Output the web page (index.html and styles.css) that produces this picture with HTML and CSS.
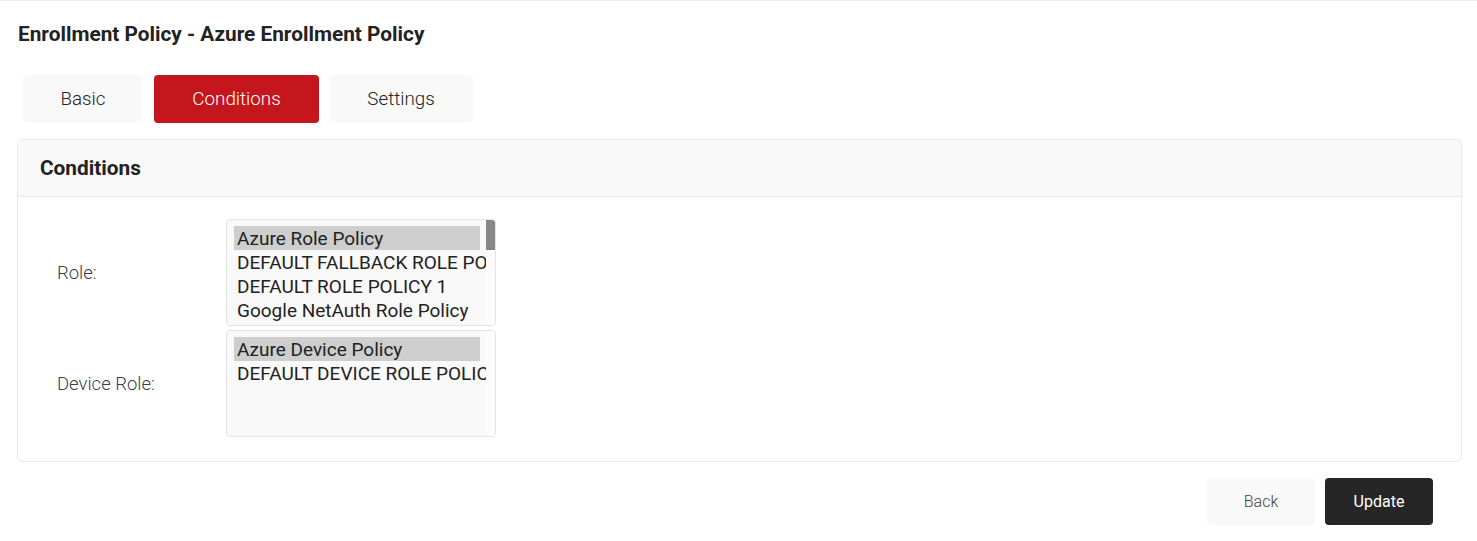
FILE: index.html
```html
<!DOCTYPE html>
<html lang="en">
<head>
<meta charset="utf-8">
<title>Enrollment Policy - Azure Enrollment Policy</title>
<link rel="stylesheet" href="styles.css">
</head>
<body>
<div class="page">
  <h1 class="title">Enrollment Policy - Azure Enrollment Policy</h1>
  <nav class="tabs">
    <button class="tab tab-basic">Basic</button>
    <button class="tab tab-active">Conditions</button>
    <button class="tab tab-settings">Settings</button>
  </nav>
  <section class="card">
    <header class="card-header">Conditions</header>
    <div class="card-body">
      <div class="form-row">
        <label class="form-label">Role:</label>
        <div class="listbox" role="listbox">
          <div class="options">
            <div class="option selected">Azure Role Policy</div>
            <div class="option">DEFAULT FALLBACK ROLE POLICY</div>
            <div class="option">DEFAULT ROLE POLICY 1</div>
            <div class="option">Google NetAuth Role Policy</div>
          </div>
          <div class="scrollbar"><div class="thumb"></div></div>
        </div>
      </div>
      <div class="form-row">
        <label class="form-label">Device Role:</label>
        <div class="listbox" role="listbox">
          <div class="options">
            <div class="option selected">Azure Device Policy</div>
            <div class="option">DEFAULT DEVICE ROLE POLICY</div>
          </div>
          <div class="scrollbar"></div>
        </div>
      </div>
    </div>
  </section>
  <div class="actions">
    <button class="btn btn-back">Back</button>
    <button class="btn btn-update">Update</button>
  </div>
</div>
</body>
</html>
```

FILE: styles.css
```css
* { box-sizing: border-box; }

html, body {
  margin: 0;
  padding: 0;
  background: #ffffff;
}

body {
  font-family: Roboto, "Liberation Sans", Arial, sans-serif;
  color: #222222;
  border-top: 1px solid #ececec;
}

.page {
  padding: 0 15px 0 17px;
}

.title {
  margin: 21px 0 0 1px;
  font-size: 20.8px;
  line-height: 24px;
  font-weight: 700;
  color: #222222;
}

.tabs {
  display: flex;
  gap: 11px;
  margin: 29px 0 0 6px;
}

.tab {
  height: 48px;
  border: none;
  border-radius: 4px;
  background: #f9f9f9;
  font-family: inherit;
  font-size: 18.8px;
  font-weight: 300;
  color: #222222;
  padding: 0;
}

.tab-basic { width: 120px; }
.tab-active { width: 165px; background: #c4161c; color: #ffffff; }
.tab-settings { width: 144px; margin-left: -1px; }

.card {
  margin-top: 16px;
  border: 1px solid #e8e8e8;
  border-radius: 6px;
  background: #ffffff;
}

.card-header {
  height: 57px;
  display: flex;
  align-items: center;
  padding-left: 22px;
  background: #f9f9f9;
  border-bottom: 1px solid #ebebeb;
  border-radius: 6px 6px 0 0;
  font-size: 20.8px;
  font-weight: 700;
  color: #222222;
}

.card-body {
  padding: 22px 0 24px;
  display: flex;
  flex-direction: column;
  gap: 4px;
}

.form-row {
  display: flex;
  align-items: center;
}

.form-label {
  width: 208px;
  padding-left: 39px;
  font-size: 18.5px;
  font-weight: 300;
  color: #34404f;
}

.listbox {
  width: 270px;
  height: 107px;
  display: flex;
  border: 1px solid #e4e4e4;
  border-radius: 4px;
  background: #f9f9f9;
  overflow: hidden;
}

.options {
  flex: 1;
  min-width: 0;
  overflow: hidden;
  padding: 6px 0 0 7px;
}

.option {
  height: 24px;
  line-height: 25px;
  padding-left: 3px;
  font-size: 19px;
  font-weight: 400;
  color: #222222;
  white-space: nowrap;
}

.option.selected {
  width: 246px;
  background: #cecece;
}

.scrollbar {
  width: 9px;
  background: #fcfcfc;
}

.thumb {
  width: 9px;
  height: 30px;
  background: #878787;
}

.actions {
  display: flex;
  justify-content: flex-end;
  gap: 10px;
  margin-top: 16px;
  padding-right: 29px;
}

.btn {
  width: 108px;
  height: 47px;
  border: none;
  border-radius: 4px;
  font-family: inherit;
  font-size: 16px;
}

.btn-back {
  background: #f9f9f9;
  color: #444444;
  font-weight: 300;
}

.btn-update {
  background: #262626;
  color: #ffffff;
  font-weight: 400;
}
```
